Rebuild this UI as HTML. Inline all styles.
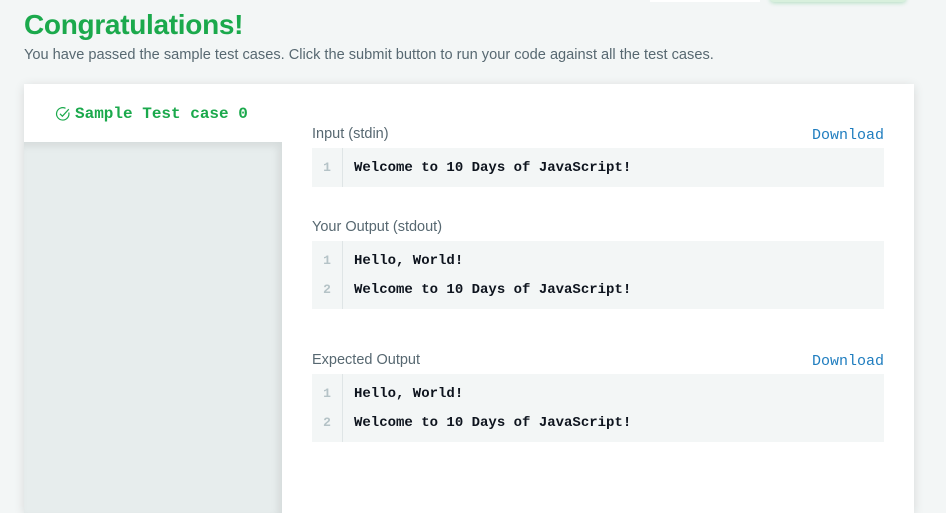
<!DOCTYPE html>
<html><head><meta charset="utf-8"><style>
*{margin:0;padding:0;box-sizing:border-box}
html,body{width:946px;height:513px;overflow:hidden}
body{background:#f3f6f6;font-family:"Liberation Sans",sans-serif;position:relative}
.abs{position:absolute}
h1{position:absolute;left:24px;top:9px;font-size:28px;font-weight:bold;color:#1ba94c;letter-spacing:-0.3px}
.sub{left:24px;top:47px;font-size:14.6px;color:#576871}
.card{left:24px;top:84px;width:890px;height:429px;background:#fff;box-shadow:0 2px 10px rgba(0,0,0,.12)}
.side{left:24px;top:142px;width:258px;height:371px;background:#e7eded;box-shadow:inset -4px 4px 8px rgba(0,0,0,.08)}
.tab{left:55px;top:105px;font-family:"Liberation Mono",monospace;font-weight:bold;font-size:16px;color:#1ba94c;display:flex;align-items:center;gap:4px}
.lbl{font-size:14.5px;color:#576871}
.dl{font-family:"Liberation Mono",monospace;font-size:15px;color:#1f7dbf}
.code{left:312px;width:572px;background:#f3f6f6}
.code .gut{position:absolute;left:30px;top:0;bottom:0;width:1px;background:#dfe5e6}
.ln{position:absolute;left:0;width:30px;text-align:center;font-family:"Liberation Mono",monospace;font-size:13px;font-weight:bold;color:#b5c3c7}
.tx{position:absolute;left:42px;font-family:"Liberation Mono",monospace;font-size:14px;font-weight:bold;color:#0e141e}
</style></head><body>
<div class="abs" style="left:650px;top:0;width:110px;height:2px;background:#fff"></div>
<div class="abs" style="left:770px;top:-6px;width:136px;height:8px;background:#d8f0dd;border-radius:4px;box-shadow:0 1px 4px rgba(27,169,76,.3)"></div>
<h1>Congratulations!</h1>
<div class="abs sub">You have passed the sample test cases. Click the submit button to run your code against all the test cases.</div>
<div class="abs card"></div>
<div class="abs side"></div>
<div class="abs tab"><svg width="16" height="16" viewBox="0 0 16 16"><path d="M13.8 6.5A6.2 6.2 0 1 1 10.5 2.3" fill="none" stroke="#1ba94c" stroke-width="1.2"/><path d="M5 7.8l2.4 2.4 6.4-7" fill="none" stroke="#1ba94c" stroke-width="1.2"/></svg>Sample Test case 0</div>

<div class="abs lbl" style="left:312px;top:126px">Input (stdin)</div>
<div class="abs dl" style="left:812px;top:127px">Download</div>
<div class="abs code" style="top:148px;height:39px"><div class="gut"></div><div class="ln" style="top:12px">1</div><div class="tx" style="top:12px">Welcome to 10 Days of JavaScript!</div></div>

<div class="abs lbl" style="left:312px;top:219px">Your Output (stdout)</div>
<div class="abs code" style="top:241px;height:68px"><div class="gut"></div><div class="ln" style="top:12px">1</div><div class="tx" style="top:12px">Hello, World!</div><div class="ln" style="top:41px">2</div><div class="tx" style="top:41px">Welcome to 10 Days of JavaScript!</div></div>

<div class="abs lbl" style="left:312px;top:352px">Expected Output</div>
<div class="abs dl" style="left:812px;top:353px">Download</div>
<div class="abs code" style="top:374px;height:68px"><div class="gut"></div><div class="ln" style="top:12px">1</div><div class="tx" style="top:12px">Hello, World!</div><div class="ln" style="top:41px">2</div><div class="tx" style="top:41px">Welcome to 10 Days of JavaScript!</div></div>
</body></html>
